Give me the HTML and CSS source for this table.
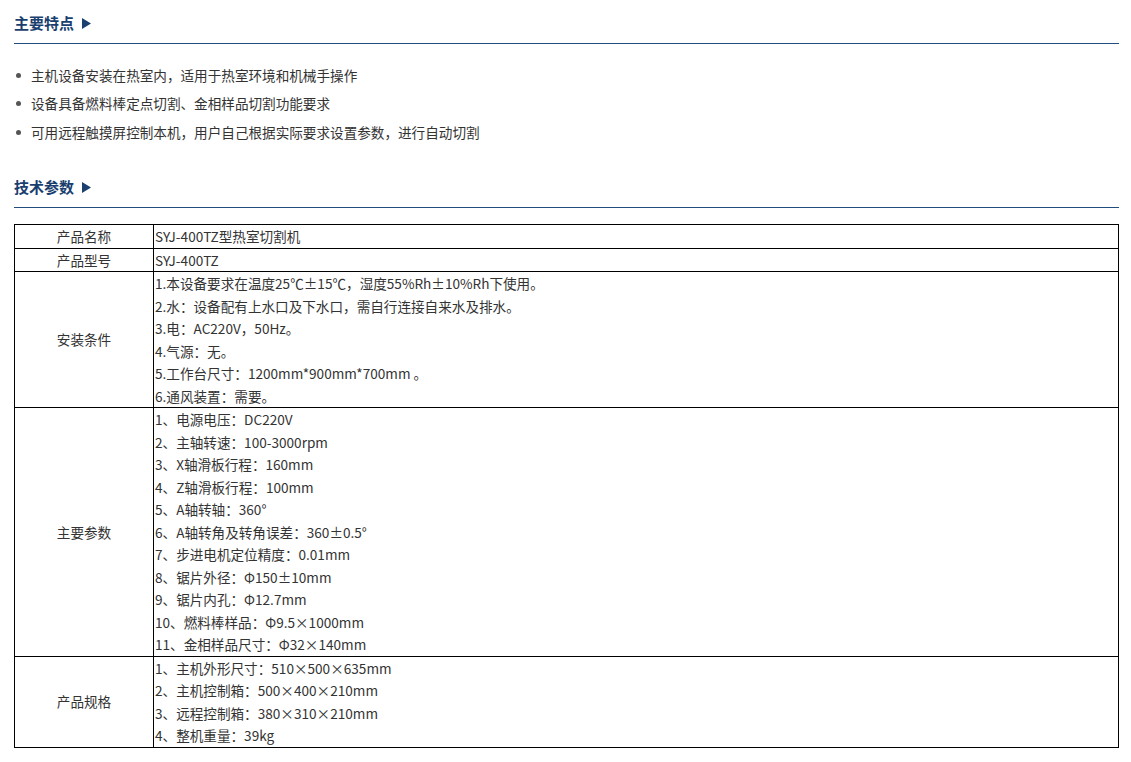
FILE: index.html
```html
<!DOCTYPE html>
<html lang="zh-CN">
<head>
<meta charset="utf-8">
<title>SYJ-400TZ型热室切割机</title>
<link rel="stylesheet" href="styles.css">
</head>
<body>
<div class="page">
  <h2 class="sec-title">主要特点<svg class="arrow" width="9" height="11" viewBox="0 0 9 11"><polygon points="0,0 9,5.5 0,11" fill="#1a4070"/></svg></h2>
  <ul class="features">
    <li>主机设备安装在热室内，适用于热室环境和机械手操作</li>
    <li>设备具备燃料棒定点切割、金相样品切割功能要求</li>
    <li>可用远程触摸屏控制本机，用户自己根据实际要求设置参数，进行自动切割</li>
  </ul>
  <h2 class="sec-title">技术参数<svg class="arrow" width="9" height="11" viewBox="0 0 9 11"><polygon points="0,0 9,5.5 0,11" fill="#1a4070"/></svg></h2>
  <table class="spec">
    <tbody>
      <tr><td class="label">产品名称</td><td class="value">SYJ-400TZ型热室切割机</td></tr>
      <tr><td class="label">产品型号</td><td class="value">SYJ-400TZ</td></tr>
      <tr><td class="label">安装条件</td><td class="value">1.本设备要求在温度25℃±15℃，湿度55%Rh±10%Rh下使用。<br>2.水：设备配有上水口及下水口，需自行连接自来水及排水。<br>3.电：AC220V，50Hz。<br>4.气源：无。<br>5.工作台尺寸：1200mm*900mm*700mm 。<br>6.通风装置：需要。</td></tr>
      <tr><td class="label">主要参数</td><td class="value">1、电源电压：DC220V<br>2、主轴转速：100-3000rpm<br>3、X轴滑板行程：160mm<br>4、Z轴滑板行程：100mm<br>5、A轴转轴：360°<br>6、A轴转角及转角误差：360±0.5°<br>7、步进电机定位精度：0.01mm<br>8、锯片外径：Φ150±10mm<br>9、锯片内孔：Φ12.7mm<br>10、燃料棒样品：Φ9.5×1000mm<br>11、金相样品尺寸：Φ32×140mm</td></tr>
      <tr><td class="label">产品规格</td><td class="value">1、主机外形尺寸：510×500×635mm<br>2、主机控制箱：500×400×210mm<br>3、远程控制箱：380×310×210mm<br>4、整机重量：39kg</td></tr>
    </tbody>
  </table>
</div>
</body>
</html>
```

FILE: styles.css
```css
html, body {
  margin: 0;
  padding: 0;
  background: #fff;
}
body {
  font-family: "Noto Sans CJK SC", sans-serif;
  color: #333;
  font-size: 13.6px;
}
.page {
  padding: 0 12px 0 14px;
}
.sec-title {
  margin: 0;
  padding: 13px 0 10px;
  line-height: 20px;
  font-size: 15px;
  font-weight: bold;
  color: #1a3f6f;
  border-bottom: 1px solid #1f4e7e;
  display: flex;
  align-items: center;
}
.arrow {
  margin-left: 8px;
}
.features {
  list-style: none;
  margin: 17px 0 18px;
  padding: 0;
}
.features li {
  display: flex;
  align-items: center;
  line-height: 28.4px;
  padding-left: 2px;
}
.features li::before {
  content: "";
  width: 5px;
  height: 5px;
  border-radius: 50%;
  background: #555;
  margin-right: 10px;
  flex: none;
}
.spec {
  margin-top: 16px;
  width: 100%;
  border-collapse: collapse;
  line-height: 22.5px;
}
.spec td {
  border: 1px solid #000;
  padding: 0 1px;
  vertical-align: middle;
}
.spec .label {
  width: 136px;
  text-align: center;
}
.spec .value {
  text-align: left;
}
```
